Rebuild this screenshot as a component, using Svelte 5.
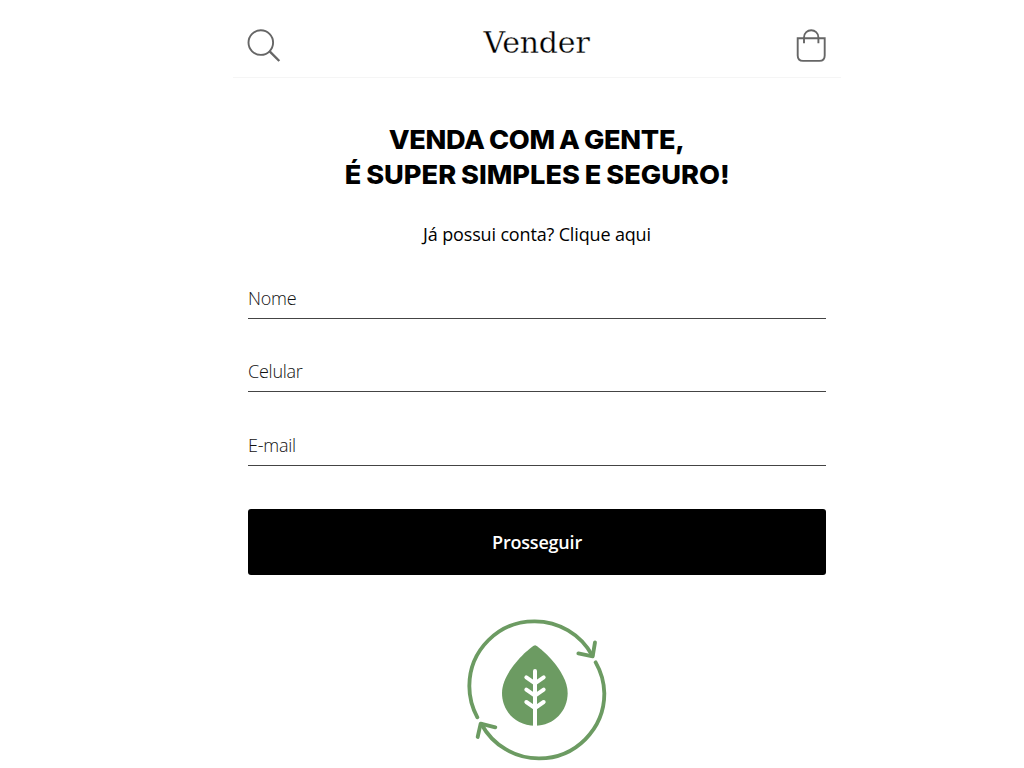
<script>
  const fields = [
    { id: 'nome', label: 'Nome', type: 'text' },
    { id: 'celular', label: 'Celular', type: 'tel' },
    { id: 'email', label: 'E-mail', type: 'email' }
  ];
</script>

<main class="screen">
  <header>
    <button class="icon" aria-label="Buscar">
      <svg width="34" height="34" viewBox="0 0 34 34" fill="none" stroke="#666" stroke-width="1.9">
        <circle cx="13.8" cy="13.6" r="12.3" />
        <path d="M22.4 22.2 32.3 32" stroke-width="2.4" />
      </svg>
    </button>
    <span class="title">Vender</span>
    <button class="icon" aria-label="Sacola">
      <svg width="30" height="34" viewBox="0 0 30 34" fill="none" stroke="#666" stroke-width="1.9">
        <path d="M1.7 9.3H28.7V26.5Q28.7 31.9 23.5 31.9H7Q1.7 31.9 1.7 26.5Z" />
        <path d="M8 14.3V8.5C8 -1.1 22.4 -1.1 22.4 8.5V14.3" />
      </svg>
    </button>
  </header>

  <h1><span class="first">VENDA COM A GENTE,</span><span class="second">É SUPER SIMPLES E SEGURO!</span></h1>
  <p class="login">Já possui conta? Clique aqui</p>

  <form>
    {#each fields as field}
      <input id={field.id} type={field.type} placeholder={field.label} aria-label={field.label} />
    {/each}
    <button class="submit" type="button">Prosseguir</button>
  </form>

  <svg class="emblem" width="165" height="158" viewBox="0 0 495 474" fill="none" stroke="#6c9b62" stroke-width="11.5" stroke-linecap="round" stroke-linejoin="round">
    <path d="M67 322A195 195 0 0 1 43 228A194.5 194.5 0 0 1 237.5 34A196 196 0 0 1 412 137" />
    <path d="M370 130 413 139 420 97" />
    <path d="M422 157A195 195 0 0 1 448 250A195 195 0 0 1 253 445A196 196 0 0 1 79 342" />
    <path d="M68 381 77 341 121 352" />
    <path d="M240 106C248 106 338 181 338 249C338 302 298 347 240 347C181 347 141 302 141 249C141 181 232 106 240 106Z" fill="#6c9b62" stroke="none" />
    <path d="M240 183V350M214 202 240 220 266 202M214 239 240 257 266 239M214 276 240 294 266 276" stroke="#fff" stroke-width="12" stroke-linecap="round" />
  </svg>
</main>

<style>
  :global(body) { background: #fff; }
  .screen {
    box-sizing: border-box;
    width: 608px;
    height: 768px;
    margin-left: 233px;
    overflow: hidden;
    display: flex;
    flex-direction: column;
    font-family: "Open Sans", sans-serif;
    color: #000;
  }
  header {
    box-sizing: border-box;
    flex: none;
    height: 78px;
    padding: 0 15px 0 14px;
    border-bottom: 1px solid #f5f5f5;
    display: grid;
    grid-template-columns: 1fr auto 1fr;
    align-items: start;
  }
  .icon {
    margin-top: 29px;
    padding: 0;
    border: 0;
    background: none;
    justify-self: start;
  }
  .icon:last-child { justify-self: end; }
  svg { display: block; }
  .title {
    padding-top: 23px;
    font: 30px/40px "DejaVu Serif", serif;
    letter-spacing: -0.2px;
    -webkit-text-stroke: 0.3px #fff;
  }
  h1 {
    margin: 44px 0 0;
    flex: none;
    display: flex;
    flex-direction: column;
    align-items: center;
    font: 800 26px/35px Inter, sans-serif;
    white-space: nowrap;
  }
  h1 span { transform: scaleX(1.045); }
  .first { letter-spacing: -0.3px; word-spacing: -1.3px; }
  .second { letter-spacing: 0; word-spacing: -1px; }
  .login {
    margin: 30px 0 0;
    text-align: center;
    font-size: 18px;
    line-height: 24px;
    letter-spacing: -0.15px;
  }
  form {
    flex: none;
    margin: 35px 15px 0;
    display: flex;
    flex-direction: column;
  }
  input {
    box-sizing: border-box;
    height: 38px;
    margin: 0 0 35.3px;
    padding: 0 0 3px;
    border: 0;
    border-bottom: 1px solid #444;
    background: none;
    font: 300 18px/24px "Open Sans", sans-serif;
    letter-spacing: -0.25px;
  }
  input::placeholder { color: #111; opacity: 1; }
  .submit {
    height: 66px;
    margin-top: 8.4px;
    padding: 0 0 1px;
    border: 0;
    border-radius: 3px;
    background: #000;
    color: #fff;
    font: 600 18px/24px "Open Sans", sans-serif;
    letter-spacing: -0.2px;
  }
  .emblem {
    flex: none;
    margin: 34.7px 0 0 222px;
  }
</style>
